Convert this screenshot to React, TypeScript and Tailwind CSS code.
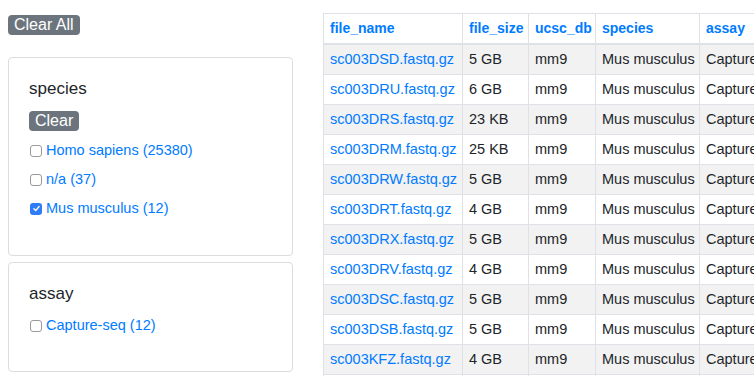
const files: [string, string][] = [
  ['sc003DSD.fastq.gz', '5 GB'],
  ['sc003DRU.fastq.gz', '6 GB'],
  ['sc003DRS.fastq.gz', '23 KB'],
  ['sc003DRM.fastq.gz', '25 KB'],
  ['sc003DRW.fastq.gz', '5 GB'],
  ['sc003DRT.fastq.gz', '4 GB'],
  ['sc003DRX.fastq.gz', '5 GB'],
  ['sc003DRV.fastq.gz', '4 GB'],
  ['sc003DSC.fastq.gz', '5 GB'],
  ['sc003DSB.fastq.gz', '5 GB'],
  ['sc003KFZ.fastq.gz', '4 GB'],
  ['sc003KGA.fastq.gz', '4 GB'],
];

type Option = { label: string; checked?: boolean };

function Checkbox({ checked }: { checked?: boolean }) {
  if (checked) {
    return (
      <span className="w-3 h-3 rounded-[3px] bg-[#2f7df6] flex items-center justify-center shrink-0">
        <svg viewBox="0 0 12 12" className="w-[9px] h-[9px]" fill="none">
          <path d="M2.5 6.2 L5 8.6 L9.5 3.4" stroke="#fff" strokeWidth="1.8" strokeLinecap="round" strokeLinejoin="round" />
        </svg>
      </span>
    );
  }
  return <span className="w-3 h-3 rounded-[3px] border border-[#9a9a9a] bg-white shrink-0" />;
}

function FacetCard({
  title,
  options,
  showClear,
}: {
  title: string;
  options: Option[];
  showClear?: boolean;
}) {
  return (
    <div
      className={`border border-[#dcdcdc] rounded-[4px] bg-white pt-[23px] px-5 ${
        showClear ? 'pb-[32px]' : 'pb-[31px]'
      }`}
    >
      <h5 className="text-[17px] leading-4 text-[#212529]">{title}</h5>
      {showClear && (
        <div className="mt-[14px] w-fit bg-[#6c757d] text-white text-[16px] leading-5 px-1.5 rounded-[4px]">
          Clear
        </div>
      )}
      <div className={showClear ? 'mt-[5px]' : 'mt-[9px]'}>
        {options.map((o) => (
          <label key={o.label} className="flex items-center gap-1 h-[29px] pl-px">
            <Checkbox checked={o.checked} />
            <span className="text-[14.5px] text-[#007bff]">{o.label}</span>
          </label>
        ))}
      </div>
    </div>
  );
}

const th = 'border border-[#dee2e6] border-b-2 px-1.5 py-1 leading-[21px] text-left font-bold text-[#007bff]';
const td = 'border border-[#dee2e6] px-1.5 py-1 leading-[21px]';

export default function App() {
  return (
    <div className="w-[754px] h-[376px] overflow-hidden bg-white font-['Liberation_Sans',Arial,sans-serif] text-[#212529]">
      <div className="flex pl-2 gap-[30px]">
        {/* Facet filters */}
        <div className="w-[285px] shrink-0 pt-[15px]">
          <div className="w-fit bg-[#6c757d] text-white text-[16px] leading-5 px-1.5 rounded-[4px]">
            Clear All
          </div>
          <div className="mt-[22px] flex flex-col gap-[6px]">
            <FacetCard
              title="species"
              showClear
              options={[
                { label: 'Homo sapiens (25380)' },
                { label: 'n/a (37)' },
                { label: 'Mus musculus (12)', checked: true },
              ]}
            />
            <FacetCard title="assay" options={[{ label: 'Capture-seq (12)' }]} />
          </div>
        </div>

        {/* Results table */}
        <div className="pt-[13px] shrink-0">
          <table className="table-fixed w-[526px] border-collapse text-[14.5px] whitespace-nowrap">
            <thead>
              <tr className="text-[14px]">
                <th className={`${th} w-[139px]`}>file_name</th>
                <th className={`${th} w-[66px]`}>file_size</th>
                <th className={`${th} w-[67px]`}>ucsc_db</th>
                <th className={`${th} w-[104px]`}>species</th>
                <th className={`${th} w-[150px]`}>assay</th>
              </tr>
            </thead>
            <tbody>
              {files.map(([name, size], i) => (
                <tr key={name} className={i % 2 === 0 ? 'bg-[#f2f2f2]' : 'bg-white'}>
                  <td className={`${td} text-[#007bff]`}>{name}</td>
                  <td className={td}>{size}</td>
                  <td className={td}>mm9</td>
                  <td className={td}>Mus musculus</td>
                  <td className={td}>Capture-seq</td>
                </tr>
              ))}
            </tbody>
          </table>
        </div>
      </div>
    </div>
  );
}
